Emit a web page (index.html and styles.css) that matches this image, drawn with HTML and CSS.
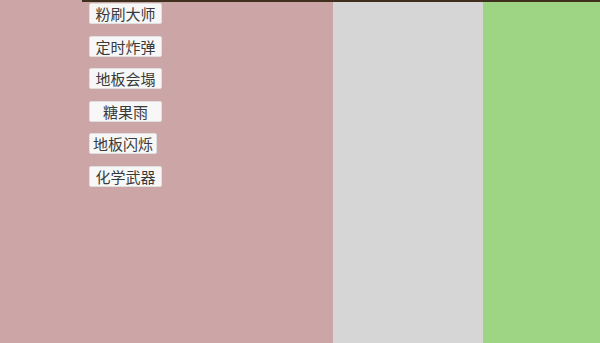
FILE: index.html
```html
<!DOCTYPE html>
<html lang="zh">
<head>
<meta charset="utf-8">
<link rel="stylesheet" href="styles.css">
</head>
<body>
<div class="page">
  <div class="topline"></div>
  <div class="col col-pink">
    <div class="btns">
      <button class="btn">粉刷大师</button>
      <button class="btn">定时炸弹</button>
      <button class="btn">地板会塌</button>
      <button class="btn">糖果雨</button>
      <button class="btn btn-narrow">地板闪烁</button>
      <button class="btn">化学武器</button>
    </div>
  </div>
  <div class="col col-gray"></div>
  <div class="col col-green"></div>
</div>
</body>
</html>
```
FILE: styles.css
```css
html, body {
  margin: 0;
  padding: 0;
  width: 600px;
  height: 343px;
  overflow: hidden;
}
.page {
  position: relative;
  display: flex;
  width: 600px;
  height: 343px;
}
.topline {
  position: absolute;
  left: 82px;
  top: 0;
  right: 0;
  height: 2px;
  background: #3e2f1f;
}
.col { height: 100%; }
.col-pink { width: 333px; background: #cca5a6; }
.col-gray { width: 150px; background: #d6d6d6; }
.col-green { flex: 1; background: #9dd585; }
.btns {
  display: flex;
  flex-direction: column;
  align-items: flex-start;
  gap: 11.5px;
  padding: 3px 0 0 89px;
}
.btn {
  box-sizing: border-box;
  width: 73px;
  height: 21px;
  padding: 0;
  margin: 0;
  border: 1px solid #e0e0e0;
  border-radius: 2px;
  background: #f7f7f7;
  color: #3a3a3a;
  font-family: "Noto Sans CJK SC", sans-serif;
  font-size: 15px;
  line-height: 19px;
  text-align: center;
}
.btn-narrow { width: 68px; }
```
